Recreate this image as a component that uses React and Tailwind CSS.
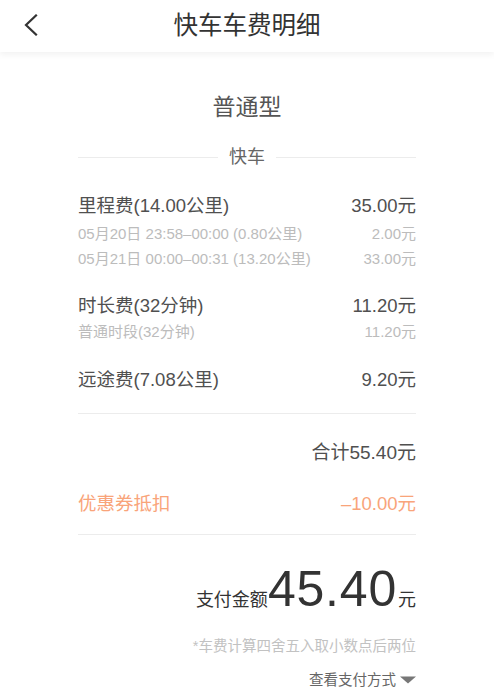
import React from "react";

const font = { fontFamily: '"Liberation Sans", "Noto Sans CJK SC", sans-serif' };

const FeeRow = ({ label, value }) => (
  <div className="flex items-center justify-between text-[18.5px] leading-[26px] text-[#505050]">
    <span>{label}</span>
    <span>{value}</span>
  </div>
);

const SubRow = ({ label, value }) => (
  <div className="flex items-center justify-between text-[15px] leading-[20px] text-[#bcbcbc]">
    <span>{label}</span>
    <span>{value}</span>
  </div>
);

export default function App() {
  return (
    <div className="w-[494px] h-[696px] bg-white overflow-hidden" style={font}>
      {/* header */}
      <div className="relative h-[52px] flex items-center justify-center bg-white shadow-[0_3px_6px_rgba(0,0,0,0.05)]">
        <svg className="absolute left-[22px] top-[14px]" width="18" height="22" viewBox="0 0 18 22">
          <path d="M14 1.5 L4 11 L14 20.5" fill="none" stroke="#333" strokeWidth="2.2" strokeLinecap="square" />
        </svg>
        <span className="text-[24.5px] text-[#333]">快车车费明细</span>
      </div>

      <div className="px-[78px]">
        <div className="mt-[40px] text-center text-[23px] leading-[30px] text-[#555]">普通型</div>

        <div className="mt-[23px] flex items-center gap-[11px] text-[18px] leading-[24px] text-[#666]">
          <div className="flex-1 h-px bg-[#ececec]" />
          <span>快车</span>
          <div className="flex-1 h-px bg-[#ececec]" />
        </div>

        <div className="mt-[24px]">
          <FeeRow label="里程费(14.00公里)" value="35.00元" />
          <div className="mt-[5px] flex flex-col gap-[5px]">
            <SubRow label="05月20日 23:58–00:00 (0.80公里)" value="2.00元" />
            <SubRow label="05月21日 00:00–00:31 (13.20公里)" value="33.00元" />
          </div>
        </div>

        <div className="mt-[24px]">
          <FeeRow label="时长费(32分钟)" value="11.20元" />
          <div className="mt-[3px]">
            <SubRow label="普通时段(32分钟)" value="11.20元" />
          </div>
        </div>

        <div className="mt-[25px]">
          <FeeRow label="远途费(7.08公里)" value="9.20元" />
        </div>

        <div className="mt-[20px] h-px bg-[#ececec]" />

        <div className="mt-[26px] text-right text-[19px] leading-[26px] text-[#505050]">合计55.40元</div>

        <div className="mt-[25px] flex items-center justify-between text-[18.5px] leading-[26px] text-[#f9a47a]">
          <span>优惠券抵扣</span>
          <span>–10.00元</span>
        </div>

        <div className="mt-[17px] h-px bg-[#ececec]" />

        <div className="mt-[26px] flex items-baseline justify-end text-[#333]">
          <span className="text-[18px]">支付金额</span>
          <span className="text-[50px] leading-[56px] tracking-[0.8px] font-light">45.40</span>
          <span className="text-[18px] ml-[1px]">元</span>
        </div>

        <div className="mt-[19px] text-right text-[14.5px] leading-[20px] text-[#c2c2c2]">*车费计算四舍五入取小数点后两位</div>

        <div className="mt-[14px] flex items-center justify-end gap-[4px] text-[14.5px] leading-[20px] text-[#666]">
          <span>查看支付方式</span>
          <svg width="16" height="8" viewBox="0 0 16 8">
            <path d="M0 0.5 L16 0.5 L8 7.5 Z" fill="#777" />
          </svg>
        </div>
      </div>
    </div>
  );
}
